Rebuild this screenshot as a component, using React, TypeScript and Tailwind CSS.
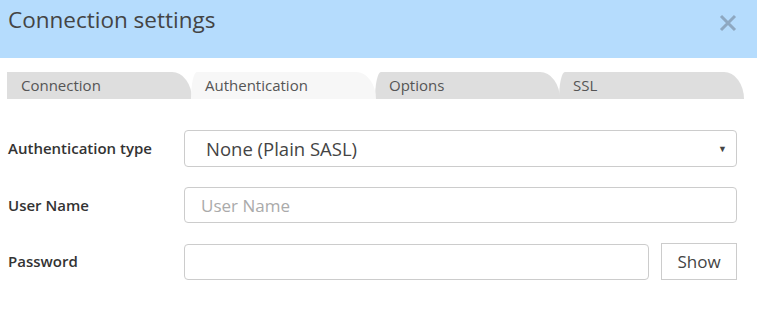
import { useState } from "react";

const TABS = ["Connection", "Authentication", "Options", "SSL"];

export default function App() {
  const [active, setActive] = useState(1);
  const [show, setShow] = useState(false);

  return (
    <div
      className="w-[757px] h-[311px] bg-white text-[#333]"
      style={{ fontFamily: '"Open Sans", "Liberation Sans", sans-serif' }}
    >
      <div className="h-[58px] bg-[#b5dcfd] flex items-start justify-between pl-2 pr-5">
        <h1 className="text-[22.5px] leading-[40px] text-[#444] font-normal">Connection settings</h1>
        <button className="mt-[14px] text-[#8ea8c1]" aria-label="Close">
          <svg width="18" height="18" viewBox="0 0 18 18">
            <path d="M2 2 L16 16 M16 2 L2 16" stroke="currentColor" strokeWidth="3" />
          </svg>
        </button>
      </div>

      <div className="flex mt-[14px] ml-[7px] h-[27px]">
        {TABS.map((t, i) => (
          <button
            key={t}
            onClick={() => setActive(i)}
            className={
              "relative w-[185px] h-[27px] pl-[14px] text-left text-[15px] text-[#555] rounded-tr-[20px_27px] " +
              (i > 0 ? "rounded-tl-[6px_27px] -ml-px " : "") +
              (i === active ? "bg-[#f7f7f7] z-10" : "bg-[#dedede]")
            }
          >
            {t}
          </button>
        ))}
      </div>

      <div className="px-2 pt-[31px] flex flex-col gap-[20px]">
        <div className="flex items-center">
          <label className="w-[176px] text-[15px] font-semibold">Authentication type</label>
          <div className="relative flex-1 mr-[12px]">
            <select className="w-full h-[37px] appearance-none border border-[#ccc] rounded-[4px] bg-white pl-[21px] text-[18.5px] text-[#444] outline-none">
              <option>None (Plain SASL)</option>
              <option>Username / Password</option>
            </select>
            <span className="pointer-events-none absolute right-[10px] top-[12px] text-[9px] text-[#444]">▼</span>
          </div>
        </div>

        <div className="flex items-center">
          <label className="w-[176px] text-[15px] font-semibold">User Name</label>
          <input
            placeholder="User Name"
            className="flex-1 mr-[12px] h-[36px] border border-[#ccc] rounded-[4px] px-4 text-[17px] text-[#444] placeholder:text-[#aaa] outline-none"
          />
        </div>

        <div className="flex items-center">
          <label className="w-[176px] text-[15px] font-semibold">Password</label>
          <input
            type={show ? "text" : "password"}
            className="w-[465px] h-[36px] border border-[#ccc] rounded-[4px] px-4 text-[17px] outline-none"
          />
          <button
            onClick={() => setShow(!show)}
            className="ml-[12px] w-[76px] h-[37px] border border-[#ccc] bg-white text-[17px] text-[#444]"
          >
            {show ? "Hide" : "Show"}
          </button>
        </div>
      </div>
    </div>
  );
}
